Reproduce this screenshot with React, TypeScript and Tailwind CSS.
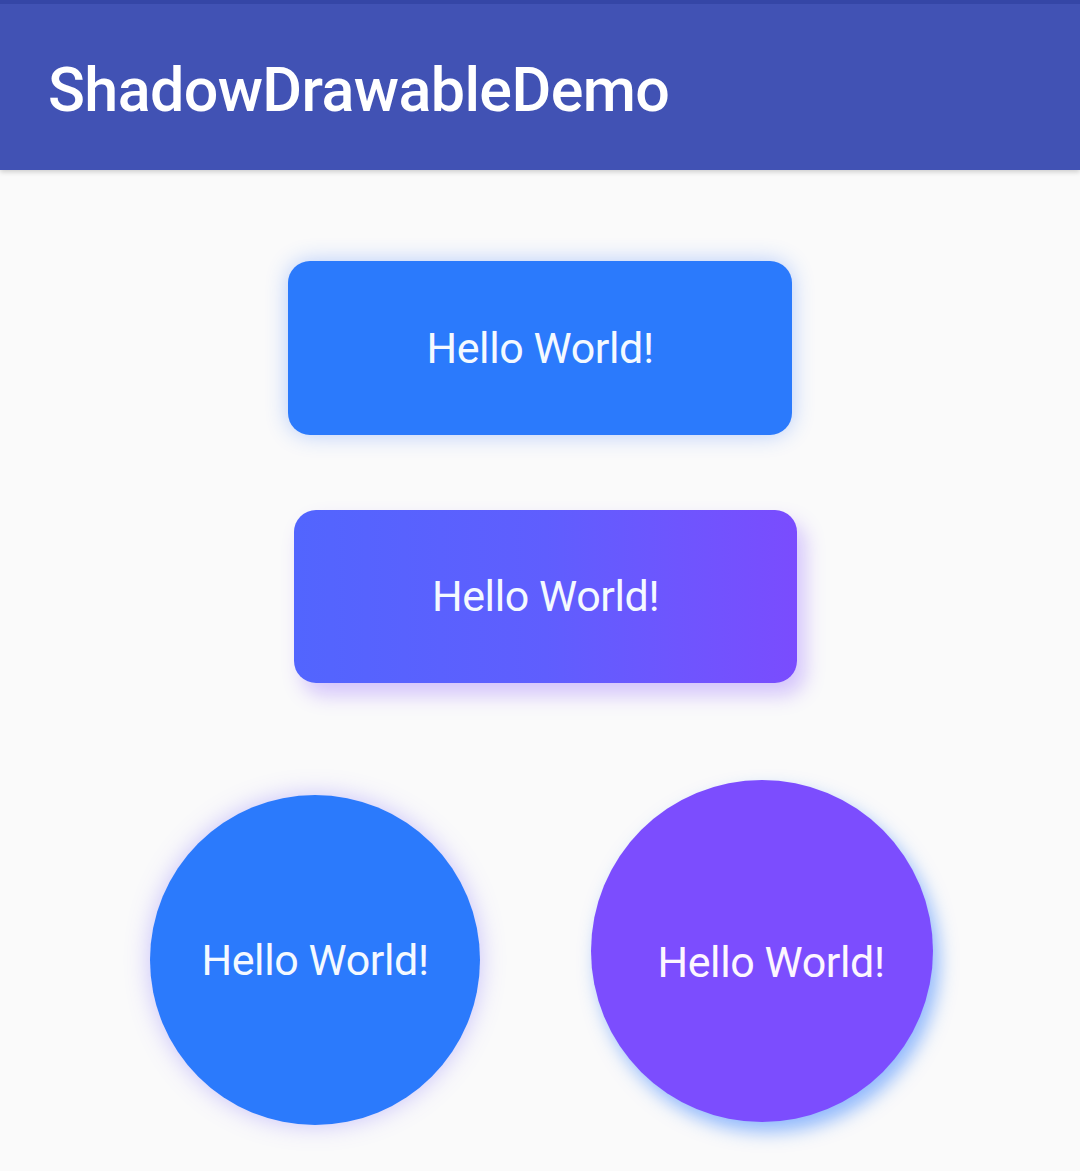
import React from "react";

const font = { fontFamily: "Roboto, 'Noto Sans', sans-serif" };

function RoundButton({ className }: { className: string }) {
  return (
    <div className={className}>
      <span className="text-[43px] leading-none tracking-[-0.4px] text-[#f4f9ff]">Hello World!</span>
    </div>
  );
}

export default function App() {
  return (
    <div className="flex min-h-[1171px] w-[1080px] flex-col bg-[#fafafa]" style={font}>
      {/* App bar */}
      <header className="flex h-[170px] flex-col bg-[#4152b4] shadow-[0_2px_5px_rgba(0,0,0,0.18)]">
        <div className="h-[4px] bg-[#3546a6]" />
        <div className="flex flex-1 items-center pl-[48px] pt-[6px]">
          <h1 className="text-[61px] font-medium leading-none tracking-[-0.6px] text-white">
            ShadowDrawableDemo
          </h1>
        </div>
      </header>

      {/* Rectangle buttons */}
      <div className="flex flex-col">
        <RoundButton className="ml-[288px] mt-[91px] flex h-[174px] w-[504px] items-center justify-center rounded-[22px] bg-[#2b7afc] shadow-[0_0_22px_rgba(41,110,255,0.32)]" />
        <RoundButton className="ml-[294px] mt-[75px] flex h-[173px] w-[503px] items-center justify-center rounded-[22px] bg-gradient-to-r from-[#5265fe] via-[#5f5efe] to-[#7a4cfe] shadow-[8px_12px_20px_rgba(130,80,255,0.32)]" />
      </div>

      {/* Circle buttons */}
      <div className="mt-[97px] flex items-start">
        <RoundButton className="ml-[150px] mt-[15px] flex h-[330px] w-[330px] items-center justify-center rounded-full bg-[#2b7afc] shadow-[0_0_24px_rgba(110,90,255,0.35)]" />
        <div className="ml-[111px] flex h-[342px] w-[342px] items-center justify-center rounded-full bg-[#7c4dfe] shadow-[6px_10px_18px_rgba(41,121,255,0.5)]">
          <span className="ml-[18px] mt-[22px] text-[43px] leading-none tracking-[-0.4px] text-[#fdf6ff]">Hello World!</span>
        </div>
      </div>
    </div>
  );
}
